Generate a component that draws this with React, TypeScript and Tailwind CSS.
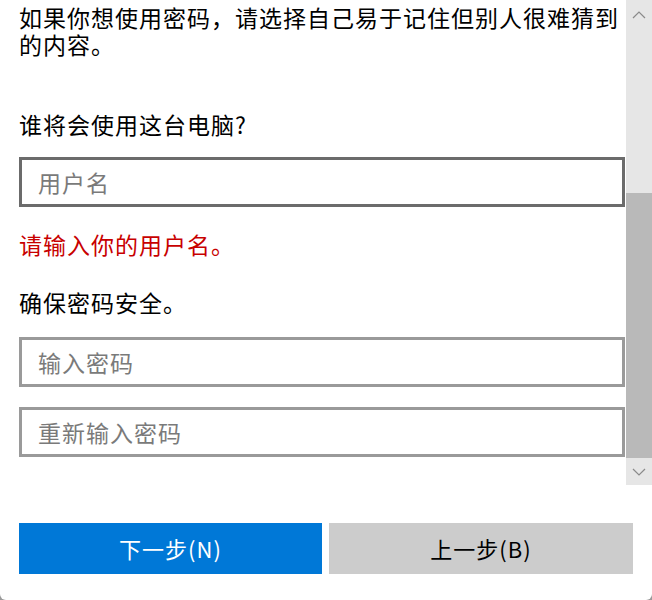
import React from "react";

const font = { fontFamily: '"Noto Sans CJK SC", "Noto Sans", sans-serif' };

const Field = ({ placeholder, dark }: { placeholder: string; dark?: boolean }) => (
	<div
		className={`h-[50px] border-[3px] bg-white flex items-center pl-[16px] text-[23px] tracking-[1px] text-[#7a7a7a] ${
			dark ? "border-[#6b6b6b]" : "border-[#9a9a9a]"
		}`}
	>
		{placeholder}
	</div>
);

const ScrollBar = () => (
	<div className="w-[26px] h-full bg-[#e6e6e6] flex flex-col">
		<div className="h-[30px] flex items-center justify-center">
			<svg width="14" height="8" viewBox="0 0 14 8" fill="none">
				<path d="M1 7 L7 1 L13 7" stroke="#8a8a8a" strokeWidth="1.2" />
			</svg>
		</div>
		<div className="h-[163px]" />
		<div className="h-[265px] bg-[#b9b9b9]" />
		<div className="flex-1 flex items-center justify-center">
			<svg width="14" height="8" viewBox="0 0 14 8" fill="none">
				<path d="M1 1 L7 7 L13 1" stroke="#8a8a8a" strokeWidth="1.2" />
			</svg>
		</div>
	</div>
);

export default function App() {
	return (
		<div className="w-[652px] h-[600px] bg-[#9a9a9a]" style={font}>
			<div className="w-full h-full bg-white rounded-b-[6px] flex flex-col">
				<div className="h-[485px] flex">
					<div className="flex-1 pl-[19px] pr-[1px] pt-[3px] text-[23px] leading-[27px] tracking-[1px] text-black">
						<p className="pt-[1px]">如果你想使用密码，请选择自己易于记住但别人很难猜到的内容。</p>
						<p className="mt-[53px]">谁将会使用这台电脑?</p>
						<div className="mt-[19px]">
							<Field placeholder="用户名" dark />
						</div>
						<p className="mt-[24px] text-[#c80000]">请输入你的用户名。</p>
						<p className="mt-[31px]">确保密码安全。</p>
						<div className="mt-[21px]">
							<Field placeholder="输入密码" />
						</div>
						<div className="mt-[20px]">
							<Field placeholder="重新输入密码" />
						</div>
					</div>
					<ScrollBar />
				</div>
				<div className="mt-[38px] pl-[19px] flex gap-[7px] text-[22px] tracking-[1px]">
					<button className="w-[303px] h-[51px] bg-[#0078d7] text-white flex items-center justify-center">
						下一步(N)
					</button>
					<button className="w-[304px] h-[51px] bg-[#cccccc] text-black flex items-center justify-center">
						上一步(B)
					</button>
				</div>
			</div>
		</div>
	);
}
